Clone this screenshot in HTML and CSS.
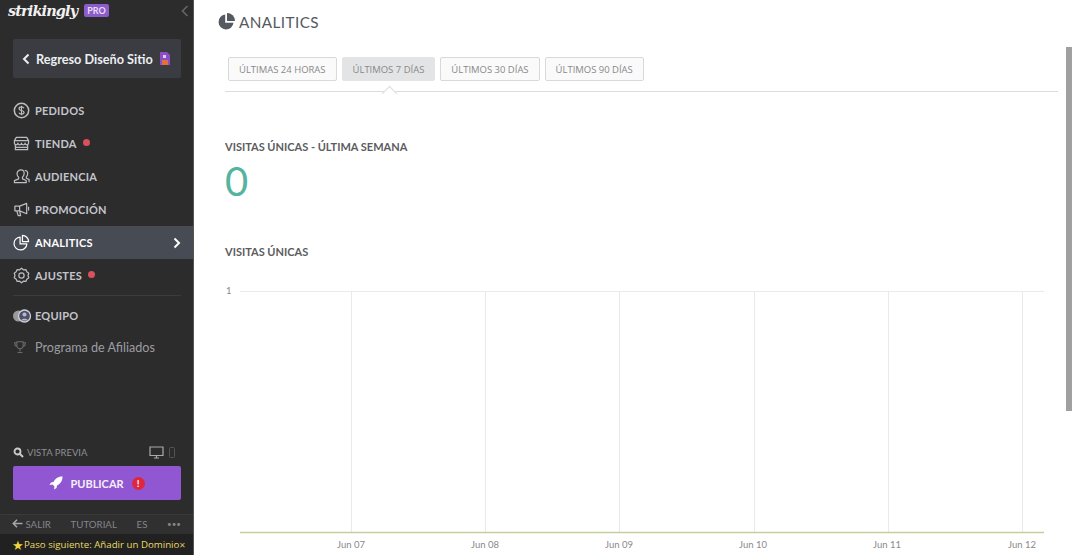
FILE: index.html
```html
<!DOCTYPE html>
<html lang="es">
  <head>
    <meta charset="UTF-8" />
    <title>Analitics</title>
    <link rel="stylesheet" href="styles.css">
  </head>
  <body>
    <aside class="sidebar">
      <div class="brand">
        <span class="logo">strikingly</span>
        <span class="pro">PRO</span>
        <svg class="collapse" width="8" height="12" viewBox="0 0 8 12"><path d="M6.5 1 1.5 6l5 5" fill="none" stroke="#666" stroke-width="1.6"/></svg>
      </div>
      <a class="back-btn">
        <svg width="8" height="12" viewBox="0 0 8 12"><path d="M6.5 1.5 2 6l4.5 4.5" fill="none" stroke="#eee" stroke-width="2"/></svg>
        <span>Regreso Diseño Sitio</span>
        <svg width="12" height="15" viewBox="0 0 12 15"><path d="M1 1h7l3 3v10H1z" fill="#8a4fc4"/><path d="M3 9h6v5H3z" fill="#e0703c"/><path d="M4 4h3v3H4z" fill="#e6c9f2"/></svg>
      </a>
      <nav class="nav">
        <a class="nav-item">
          <svg class="nav-icon" viewBox="0 0 18 18"><circle cx="9" cy="9" r="7.6" stroke-width="1.600"/><path d="M11.600 6.600C11 5.400 9.800 5.200 9 5.200c-1.500 0-2.600.8-2.600 1.900 0 2.500 5.300 1.300 5.300 3.800 0 1.100-1.200 1.900-2.700 1.900-1 0-2.200-.4-2.700-1.500M9 3.900v10.200"/></svg>
          <span>PEDIDOS</span>
        </a>
        <a class="nav-item">
          <svg class="nav-icon" viewBox="0 0 18 18"><path d="M3.500 2.500h11l2 3.500v2.500a1.800 1.800 0 0 1-3.700 0 1.900 1.900 0 0 1-3.800 0 1.900 1.900 0 0 1-3.800 0 1.800 1.800 0 0 1-3.700 0V6zM1.500 6h15M2.500 10.500v5h13v-5M2.500 13h13"/></svg>
          <span>TIENDA</span><i class="dot"></i>
        </a>
        <a class="nav-item">
          <svg class="nav-icon" viewBox="0 0 18 18"><path d="M8.500 2c2.300 0 3.500 1.700 3.300 4-.2 2-.9 3.200-1.800 3.900v1.600l4 1.800v2.200H1.500v-2.200l4.500-1.800V9.900C5 9.200 4.400 8 4.300 6c-.1-2.300 1.900-4 4.200-4zM12.500 2.500c2 .2 3.200 1.600 3 3.700-.1 1.400-.6 2.500-1.400 3.200v1.400l2.900 1.300v3"/></svg>
          <span>AUDIENCIA</span>
        </a>
        <a class="nav-item">
          <svg class="nav-icon" viewBox="0 0 18 18"><path d="M14.500 2.500v11L7 10.500H2V5.500h5zM16.500 6v4M7 5.500v5M4 10.500l1.500 5h2.500l-1-5"/></svg>
          <span>PROMOCIÓN</span>
        </a>
        <a class="nav-item active">
          <svg class="nav-icon" viewBox="0 0 18 18"><path d="M7.500 3.300a6.800 6.800 0 1 0 7.200 7.200H7.500z"/><path d="M10 1.500a6.700 6.700 0 0 1 6.500 6.500H10z"/></svg>
          <span>ANALITICS</span>
          <svg class="chevron" width="8" height="12" viewBox="0 0 8 12"><path d="M1.500 1.500 6 6l-4.500 4.500" fill="none" stroke="#fff" stroke-width="2"/></svg>
        </a>
        <a class="nav-item">
          <svg class="nav-icon" viewBox="0 0 18 18"><path d="M9 1.300l2 1.700 2.600-.3 1 2.400 2.100 1.500-.8 2.400.8 2.400-2.100 1.500-1 2.400-2.600-.3-2 1.700-2-1.700-2.600.3-1-2.400-2.100-1.500.8-2.400-.8-2.400 2.100-1.500 1-2.400 2.600.3z"/><circle cx="9" cy="9" r="2.800"/></svg>
          <span>AJUSTES</span><i class="dot"></i>
        </a>
        <div class="nav-divider"></div>
        <a class="nav-item team">
          <svg class="nav-icon wide" viewBox="0 0 20 14"><circle cx="6.500" cy="7" r="5.500" fill="#9a9a9a" stroke="none"/><circle cx="12.500" cy="7" r="6" fill="#4e5068" stroke="#cfcfd8"/><circle cx="12.500" cy="5.500" r="2" fill="#b9bac8" stroke="none"/><path d="M9 11.500c.8-2.500 6.200-2.500 7 0" fill="#b9bac8" stroke="none"/></svg>
          <span>EQUIPO</span>
        </a>
        <a class="nav-item plain">
          <svg class="nav-icon trophy" viewBox="0 0 18 18"><path d="M5 1.500h8v5c0 2.500-1.700 4-4 4s-4-1.500-4-4zM5 3H2c0 3 1.200 4.500 3.500 5M13 3h3c0 3-1.200 4.500-3.500 5M9 10.500v3.500M6 15.500h6" /></svg>
          <span>Programa de Afiliados</span>
        </a>
      </nav>
      <div class="preview">
        <svg width="11" height="11" viewBox="0 0 11 11"><circle cx="4.500" cy="4.500" r="3" fill="none" stroke="#ccc" stroke-width="1.800"/><path d="M7 7l3 3" stroke="#ccc" stroke-width="2"/></svg>
        <span class="preview-label">VISTA PREVIA</span>
        <svg class="desktop" width="15" height="13" viewBox="0 0 15 13"><path d="M1 1h13v8.500H1zM5 12h5M7.500 9.500V12" fill="none" stroke="#aaa" stroke-width="1.200"/></svg>
        <svg width="6" height="11" viewBox="0 0 6 11"><rect x=".5" y=".5" width="5" height="10" rx="1" fill="none" stroke="#555"/></svg>
      </div>
      <a class="publish">
        <svg width="14" height="14" viewBox="0 0 14 14"><path d="M13.500.5C9.500.5 6.500 2 4.500 6L2 6.500.5 9l3-.5 2 2-.5 3L7.500 12l.5-2.500c4-2 5.500-5 5.500-9z" fill="#fff"/></svg>
        <span>PUBLICAR</span>
        <i class="alert">!</i>
      </a>
      <div class="foot-links">
        <span class="exit"><svg width="11" height="9" viewBox="0 0 11 9"><path d="M5 .8 1.300 4.500 5 8.200M1.500 4.500H10.500" fill="none" stroke="#a5a5a8" stroke-width="1.600"/></svg> SALIR</span>
        <span>TUTORIAL</span>
        <span>ES</span>
        <span class="more">•••</span>
      </div>
      <div class="next-step">
        <span class="star">★</span>
        <span class="next-text">Paso siguiente: Añadir un Dominio</span>
        <span class="close">✕</span>
      </div>
    </aside>

    <main class="content">
      <h1 class="page-title">
        <svg width="17" height="17" viewBox="0 0 17 17"><path d="M7.200 1.500a7.500 7.500 0 1 0 8.300 8.300H7.200z" fill="#555a60"/><path d="M9 0a8 8 0 0 1 8 8H9z" fill="#555a60"/></svg>
        ANALITICS
      </h1>
      <div class="tabs">
        <a class="tab">ÚLTIMAS 24 HORAS</a>
        <a class="tab selected">ÚLTIMOS 7 DÍAS</a>
        <a class="tab">ÚLTIMOS 30 DÍAS</a>
        <a class="tab">ÚLTIMOS 90 DÍAS</a>
      </div>
      <h2 class="stat-label">VISITAS ÚNICAS - ÚLTIMA SEMANA</h2>
      <div class="stat-value">0</div>
      <h2 class="chart-label">VISITAS ÚNICAS</h2>
      <svg class="chart" width="847" height="270" viewBox="225 285 847 270">
        <g stroke="#e9e9e9" fill="none">
          <path d="M240 291.500H1044"/>
          <path d="M351.500 291V533M485.500 291V533M619.500 291V533M754.500 291V533M888.500 291V533M1022.500 291V533"/>
        </g>
        <path d="M240 532.500H1044" stroke="#c5ce9c" stroke-width="1.500"/>
        <g class="chart-text">
          <text x="226" y="294">1</text>
          <text x="351" y="548" text-anchor="middle">Jun 07</text>
          <text x="485" y="548" text-anchor="middle">Jun 08</text>
          <text x="619" y="548" text-anchor="middle">Jun 09</text>
          <text x="753" y="548" text-anchor="middle">Jun 10</text>
          <text x="887" y="548" text-anchor="middle">Jun 11</text>
          <text x="1022" y="548" text-anchor="middle">Jun 12</text>
        </g>
      </svg>
      <div class="scroll-thumb"></div>
    </main>
  </body>
</html>
```

FILE: styles.css
```css
* {
  box-sizing: border-box;
}
html,
body {
  margin: 0;
  height: 555px;
  overflow: hidden;
}
body {
  display: flex;
  font-family: Lato, sans-serif;
  background: #fff;
  color: #555;
}
a {
  color: inherit;
  text-decoration: none;
}
.sidebar {
  width: 194px;
  flex: none;
  display: flex;
  flex-direction: column;
  background: #2c2c2c;
  border-right: 1px solid #555;
  color: #c4c5cc;
}
.brand {
  height: 39px;
  padding: 0 4px 18px 8px;
  display: flex;
  align-items: center;
}
.logo {
  font-family: "DejaVu Serif", serif;
  font-style: italic;
  font-weight: 700;
  font-size: 14.500px;
  letter-spacing: -0.9px;
  color: #f2f2f2;
}
.pro {
  margin-left: 7px;
  padding: 1px 3px;
  background: #8d5ccb;
  border-radius: 2px;
  font-size: 9px;
  font-weight: 700;
  color: #e6dcf5;
}
.collapse {
  margin-left: auto;
}
.back-btn {
  margin: 0 12px 0 13px;
  height: 39px;
  display: flex;
  align-items: center;
  gap: 6px;
  padding-left: 9px;
  background: #3a3c41;
  border-radius: 2px;
  font-size: 12.700px;
  font-weight: 700;
  color: #eceef2;
}
.nav {
  margin-top: 16px;
  flex: 1;
  display: flex;
  flex-direction: column;
}
.nav-item {
  height: 33px;
  flex: none;
  display: flex;
  align-items: center;
  padding: 0 12px 0 13px;
  font-size: 11px;
  font-weight: 700;
  letter-spacing: 0.2px;
}
.nav-icon {
  width: 17px;
  height: 17px;
  margin-right: 5px;
  flex: none;
  fill: none;
  stroke: #bdbdc2;
  stroke-width: 1.300;
  stroke-linejoin: round;
}
.nav-icon.wide {
  width: 20px;
  height: 14px;
  margin-left: -1px;
  margin-right: 3px;
}
.nav-icon.trophy {
  width: 14px;
  height: 15px;
  margin-left: 0;
  margin-right: 8px;
  stroke: #6c6c6c;
}
.nav-item.active {
  background: #474b54;
  color: #fff;
}
.nav-item.active .nav-icon {
  stroke: #fff;
}
.chevron {
  margin-left: auto;
}
.dot {
  width: 7px;
  height: 7px;
  margin-left: 6px;
  margin-top: -2px;
  border-radius: 50%;
  background: #d9505f;
}
.nav-divider {
  height: 1px;
  margin: 3px 12px 3px 13px;
  background: #3c3c3c;
}
.nav-item.plain {
  margin-top: -1px;
  font-weight: 400;
  font-size: 12.600px;
  color: #9c9da3;
  letter-spacing: 0;
}
.preview {
  height: 28px;
  flex: none;
  display: flex;
  align-items: center;
  padding: 0 18px 0 13px;
  font-size: 9.500px;
  color: #8e8f94;
}
.preview-label {
  margin-left: 3px;
}
.desktop {
  margin-left: auto;
  margin-right: 5px;
}
.publish {
  margin: 0 12px 0 13px;
  height: 34px;
  flex: none;
  display: flex;
  align-items: center;
  justify-content: center;
  gap: 7px;
  background: #9157d2;
  border-radius: 2px;
  font-size: 11px;
  font-weight: 700;
  color: #f4effb;
}
.alert {
  width: 13px;
  height: 13px;
  margin-left: 1px;
  border-radius: 50%;
  background: #e0263f;
  color: #fff;
  font-style: normal;
  font-size: 10px;
  line-height: 13px;
  text-align: center;
}
.foot-links {
  margin-top: 14px;
  height: 20px;
  flex: none;
  display: flex;
  align-items: center;
  justify-content: space-between;
  padding: 0 12px 2px;
  background: #303030;
  border-top: 1px solid #3a3a3a;
  font-size: 9.700px;
  color: #84858a;
}
.more {
  font-size: 8px;
  letter-spacing: 0;
}
.next-step {
  height: 21px;
  flex: none;
  display: flex;
  align-items: center;
  padding-left: 12px;
  background: #212121;
  font-family: "Open Sans", sans-serif;
  font-size: 9.700px;
  color: #e9dc66;
}
.star {
  width: 12px;
  font-size: 13px;
  color: #f2d43d;
}
.next-text {
  white-space: nowrap;
}
.close {
  font-size: 8px;
  color: #c9c06a;
}
.content {
  position: relative;
  flex: 1;
  padding: 0 0 0 31px;
  overflow: hidden;
}
.page-title {
  margin: 0 0 0 -7px;
  height: 43px;
  display: flex;
  align-items: center;
  gap: 4px;
  font-size: 15.300px;
  font-weight: 400;
  letter-spacing: 0.4px;
  color: #555a60;
}
.tabs {
  position: relative;
  width: 833px;
  height: 49px;
  padding: 14px 0 0 3px;
  display: flex;
  align-items: flex-start;
  gap: 5px;
  border-bottom: 1px solid #dcdcdc;
}
.tab {
  height: 24px;
  padding: 0 10px;
  display: flex;
  align-items: center;
  background: #fafafa;
  border: 1px solid #d9d9d9;
  border-radius: 2px;
  font-family: "Open Sans", sans-serif;
  font-size: 9.470px;
  color: #888;
}
.tab.selected {
  position: relative;
  background: #e3e4e6;
  border-color: #e3e4e6;
}
.tab.selected::after {
  content: "";
  position: absolute;
  left: 41px;
  top: 30px;
  width: 10px;
  height: 10px;
  background: #fff;
  border-left: 1px solid #dcdcdc;
  border-top: 1px solid #dcdcdc;
  transform: rotate(45deg);
}
.stat-label,
.chart-label {
  margin: 0;
  font-size: 11px;
  font-weight: 700;
  color: #5c5c60;
}
.stat-label {
  margin-top: 47px;
  line-height: 16px;
}
.stat-value {
  height: 54px;
  font-size: 40px;
  font-weight: 400;
  line-height: 52px;
  color: #55b3a0;
}
.chart-label {
  margin-top: 35px;
  line-height: 16px;
}
.chart {
  display: block;
  margin: 25px 0 0 0;
}
.chart-text {
  font-size: 9.500px;
  fill: #8a8a8a;
}
.scroll-thumb {
  position: absolute;
  left: 872px;
  top: 47px;
  width: 6px;
  height: 364px;
  background: #a0a0a0;
}
```
